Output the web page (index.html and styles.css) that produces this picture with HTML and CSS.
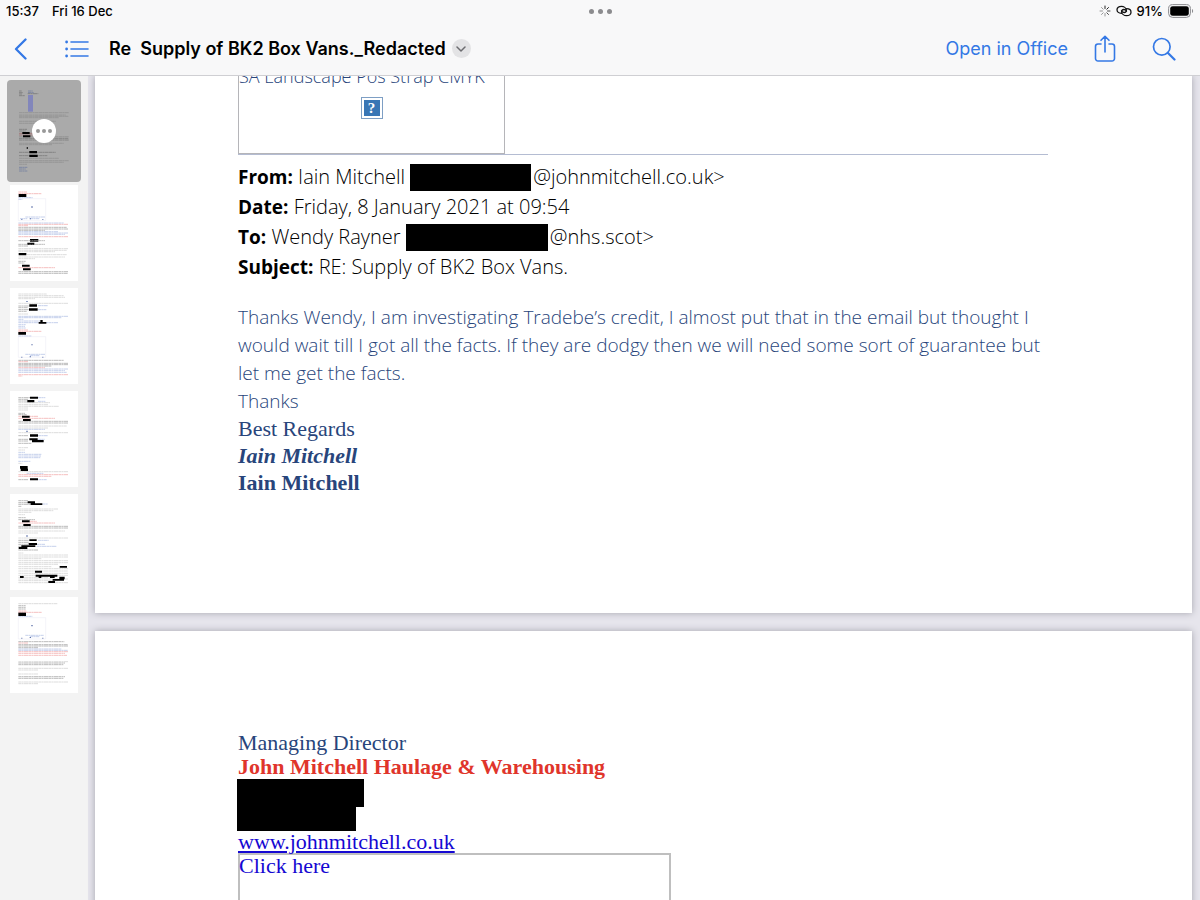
FILE: index.html
```html
<!DOCTYPE html>
<html lang="en">
<head>
<meta charset="utf-8">
<meta name="viewport" content="width=device-width, initial-scale=1">
<title>Re Supply of BK2 Box Vans._Redacted</title>
<link rel="stylesheet" href="styles.css">
</head>
<body>
<div class="app">
  <header class="header">
    <div class="status">
      <div class="status-left"><span>15:37</span><span>Fri 16 Dec</span></div>
      <div class="dots"><i></i><i></i><i></i></div>
      <div class="status-right">
        <svg class="spinner" viewBox="0 0 12 12" width="12" height="12" stroke="#222" stroke-width="1" stroke-linecap="round"><path d="M6 1v2.5M9.5 2.5L7.8 4.2"/><path d="M11 6H8.5M9.5 9.5L7.8 7.8" opacity=".8"/><path d="M6 11V8.5M2.5 9.5l1.7-1.7M1 6h2.5M2.5 2.5l1.7 1.7" opacity=".45"/></svg>
        <svg viewBox="0 0 16 12" width="16" height="12" fill="none" stroke="#111" stroke-width="1.3" stroke-linecap="round"><path d="M5.500 8.300C2.800 8.300 1 6.800 1 4.800S2.800 1.300 5.500 1.300c2.400 0 4.600 1.700 4.900 3.700.2 1.400-.8 2.500-2.200 2.500-1.300 0-2.400-.7-2.700-1.700"/><path d="M10.500 3.700c2.700 0 4.500 1.500 4.500 3.500s-1.800 3.500-4.500 3.500c-2.400 0-4.600-1.700-4.900-3.700-.2-1.400.8-2.500 2.200-2.500 1.300 0 2.400.7 2.700 1.700"/></svg>
        <span>91%</span>
        <svg viewBox="0 0 26 14" width="26" height="14"><rect x=".6" y=".6" width="21.800" height="12.800" rx="4" fill="none" stroke="#8a8a8e"/><rect x="2.200" y="2.200" width="18.600" height="9.600" rx="2.400"/><path d="M24 5v4c1.500-.6 1.500-3.400 0-4z" fill="#8a8a8e"/></svg>
      </div>
    </div>
    <div class="toolbar">
      <button class="icon-btn back" aria-label="Back"><svg viewBox="0 0 14 22" width="14" height="22" fill="none" stroke="currentColor" stroke-width="2.300" stroke-linecap="round" stroke-linejoin="round"><path d="M11.500 1.500L2 11l9.500 9.500"/></svg></button>
      <button class="icon-btn list" aria-label="Contents"><svg viewBox="0 0 24 18" width="24" height="18" fill="currentColor"><circle cx="1.600" cy="2" r="1.400"/><circle cx="1.600" cy="9" r="1.400"/><circle cx="1.600" cy="16" r="1.400"/><path d="M6 2h17M6 9h17M6 16h17" stroke="currentColor" stroke-width="1.600" stroke-linecap="round"/></svg></button>
      <h1 class="title">Re  Supply of BK2 Box Vans._Redacted</h1>
      <button class="more" aria-label="Document options"><svg viewBox="0 0 10 6" width="10" height="6" fill="none" stroke="#6c6c70" stroke-width="1.500" stroke-linecap="round" stroke-linejoin="round"><path d="M1 1l4 4 4-4"/></svg></button>
      <button class="text-btn">Open in Office</button>
      <button class="icon-btn share" aria-label="Share"><svg viewBox="0 0 22 28" width="22" height="28" fill="none" stroke="currentColor" stroke-width="1.600" stroke-linecap="round" stroke-linejoin="round"><path d="M7 9H4a2.500 2.500 0 0 0-2.500 2.500v12A2.500 2.500 0 0 0 4 26h14a2.500 2.500 0 0 0 2.500-2.500v-12A2.500 2.500 0 0 0 18 9h-3M11 17V1.500M7 5.300l4-4 4 4"/></svg></button>
      <button class="icon-btn" aria-label="Search"><svg viewBox="0 0 24 24" width="24" height="24" fill="none" stroke="currentColor" stroke-linecap="round"><circle cx="9.800" cy="9.800" r="8.300" stroke-width="1.700"/><path d="M16 16l6.500 6.500" stroke-width="2.200"/></svg></button>
    </div>
  </header>
  <div class="body">
    <nav class="thumbs" aria-label="Pages">
      <button class="thumb selected" aria-label="Page 1">
        <svg viewBox="0 0 222 306">
          <path class="k" d="M36 33h8M36 38h12M36 42h10M36 47h18M62 41h32M36 148h24M36 153h20"/>
          <rect class="purple" x="63" y="45" width="15" height="50"/><path class="b" d="M63 33h14M63 38h18"/>
          <path class="g" d="M36 98h149M36 105h140M36 109h148M36 113h120M36 124h110M36 130h96M36 170h150M36 190h134M36 194h100M36 235h120M36 242h150M36 247h134M36 253h24"/>
          <path class="k" d="M36 175h148M36 180h150M36 217h110M36 227h85"/><path class="r" d="M36 160h50M36 165h80"/><path class="b" d="M36 262h25M36 267h20M36 273h25"/>
          <path class="redact" d="M46 156h22v6H46zM48 166h22v6H48zM67 213h23v7H67zM67 224h25v7H67zM59 202h4v4h-4z"/>
        </svg>
        <span class="bubble"><i></i><i></i><i></i></span>
      </button>
      <button class="thumb" aria-label="Page 2">
        <svg viewBox="0 0 204 288">
          <path class="r" d="M25 21h26M25 26h70M25 118h150M25 122h30M25 155h150M25 248h110"/><path class="b" d="M25 38h43M25 43h12M46 96h60M30 101h22M60 101h28M25 114h137M25 140h120M25 144h150M25 148h140"/>
          <path class="frame" d="M25 41h82v66H25z"/><path class="redact" d="M26 27h23v9H26zM60 162h25v8H60zM52 173h21v7H52zM26 204h23v7H26zM36 239h23v6H36zM39 250h23v6H39z"/>
          <path class="k" d="M25 127h145M25 132h150M25 136h80M25 167h80M25 178h80M25 183h30M25 229h22M25 234h18M25 260h150M25 265h148"/><path class="g" d="M25 191h150M25 196h145M25 200h110M51 209h120M25 216h140M25 221h50"/>
          <path class="mark" d="M64 64h4v4h-4zM34 102h3v3h-3zM59 100h4v3h-4zM97 102h3v3h-3z"/>
        </svg>
      </button>
      <button class="thumb" aria-label="Page 3">
        <svg viewBox="0 0 204 288">
          <path class="g" d="M25 18h85M25 23h137M25 28h140M25 32h50M25 46h149M25 78h30"/><path class="k" d="M25 54h40M25 59h28M25 65h40M25 70h25M25 217h137M25 226h150M25 230h150M25 234h100"/>
          <path class="b" d="M84 53h30M84 65h25M25 85h149M25 89h130M25 94h15M25 99h65M25 104h120M25 110h22M25 115h20M25 120h22M25 144h40M46 199h60M60 203h28M25 243h149M25 248h140M25 253h145"/>
          <path class="r" d="M25 126h30M25 130h70M25 221h30M25 239h80M25 260h150M25 264h12"/><path class="frame" d="M25 146h82v62H25z"/>
          <path class="redact" d="M58 49h23v7H58zM57 61h26v7H57zM91 96h7v6h-7zM86 102h23v5H86zM25 132h23v8H25z"/><path class="mark" d="M49 39h4v3h-4zM64 169h4v3h-4zM34 206h3v3h-3zM59 205h4v3h-4zM97 206h3v3h-3z"/>
        </svg>
      </button>
      <button class="thumb" aria-label="Page 4">
        <svg viewBox="0 0 204 288">
          <path class="k" d="M25 20h35M25 25h30M25 30h28M25 67h20M25 71h25M25 91h149M25 96h150M25 134h30M25 145h30M25 150h30M25 157h40M25 266h30"/>
          <path class="g" d="M25 35h95M25 41h90M25 46h122M25 51h30M25 57h30M25 105h145M25 111h90M25 125h149M25 170h30M25 177h20M25 217h12M25 242h149"/>
          <path class="b" d="M84 20h22M84 31h22M25 115h80M84 134h30M84 145h20M25 184h20M25 190h70M25 195h68M25 200h66M25 211h36M50 247h50M85 266h25"/><path class="r" d="M25 76h60M25 82h110M25 251h149M25 256h100"/>
          <path class="redact" d="M60 17h24v6H60zM52 27h21v7H52zM36 74h23v6H36zM39 84h23v6H39zM60 130h24v7H60zM58 142h25v6H58zM66 147h35v7H66zM30 225h23v8H30zM32 233h22v7H32zM60 262h24v6H60z"/><path class="mark" d="M49 119h4v4h-4z"/>
        </svg>
      </button>
      <button class="thumb" aria-label="Page 5">
        <svg viewBox="0 0 204 288">
          <path class="k" d="M25 20h30M25 26h30M25 31h40M25 37h10M25 71h22M25 77h50M25 97h149M25 102h150M25 139h32M25 145h32M25 151h30M25 157h20M25 168h60"/>
          <path class="g" d="M25 45h120M25 50h105M25 55h40M25 62h20M25 111h140M25 117h60M25 132h149M25 177h15M25 183h150M25 189h149M25 194h70M25 200h150M25 206h149M25 211h120M25 218h100M25 224h149M25 231h148M25 238h150M25 244h149M25 250h90M25 255h149M25 260h120M25 266h149"/>
          <path class="b" d="M97 30h17M84 139h32M80 151h25M80 157h60"/><path class="r" d="M60 82h20M25 87h110"/>
          <path class="redact" d="M53 22h22v6H53zM62 28h35v5H62zM36 79h23v6H36zM40 90h22v6H40zM58 136h22v5H58zM56 147h25v6H56zM34 154h42v5H34zM26 159h26v6H26zM149 216h22v5h-22zM75 230h21v6H75zM77 242h65v6H77zM30 246h11v6H30zM86 246h8v6h-8zM120 246h14v6h-14zM148 248h16v8h-16zM128 255h34v5h-34zM115 261h20v6h-20z"/><path class="mark" d="M49 124h4v4h-4z"/>
        </svg>
      </button>
      <button class="thumb" aria-label="Page 6">
        <svg viewBox="0 0 204 288">
          <path class="g" d="M25 20h117M25 194h149M25 214h149M25 219h60M25 231h60M25 255h149M25 260h60"/><path class="k" d="M25 26h22M25 31h22M25 36h22M25 134h138M25 143h148M25 147h149M25 152h60M25 198h140M25 203h135M25 239h140M25 244h135"/>
          <path class="r" d="M25 42h24M25 46h71M25 138h30M25 164h150M25 169h140M25 175h146"/><path class="b" d="M25 58h42M46 115h55M60 119h28M25 156h130M25 160h148"/>
          <path class="frame" d="M25 62h82v64H25z"/><path class="redact" d="M25 47h23v10H25z"/><path class="mark" d="M64 84h4v4h-4zM34 122h3v3h-3zM59 120h4v3h-4zM97 122h3v3h-3z"/>
        </svg>
      </button>
    </nav>
    <main class="document">
      <article class="page first">
        <div class="rule-row">
          <div class="image-frame"><span>SA Landscape Pos Strap CMYK</span>
            <div class="missing">?</div>
          </div>
        </div>
        <div class="mail-head">
          <p><b>From:</b> Iain Mitchell <span class="bar from"></span>@johnmitchell.co.uk&gt;</p>
          <p><b>Date:</b> Friday, 8 January 2021 at 09:54</p>
          <p><b>To:</b> Wendy Rayner <span class="bar to"></span>@nhs.scot&gt;</p>
          <p><b>Subject:</b> RE: Supply of BK2 Box Vans.</p>
        </div>
        <div class="message">
          <p>Thanks Wendy, I am investigating Tradebe’s credit, I almost put that in the email but thought I would wait till I got all the facts. If they are dodgy then we will need some sort of guarantee but let me get the facts.</p>
          <p>Thanks</p>
        </div>
        <div class="signature">
          <p>Best Regards</p>
          <p class="script">Iain Mitchell</p>
          <p><b>Iain Mitchell</b></p>
        </div>
      </article>
      <article class="page second">
        <p>Managing Director</p>
        <p class="company">John Mitchell Haulage &amp; Warehousing</p>
        <div class="block wide"></div>
        <div class="block"></div>
        <p class="site"><a href="#site">www.johnmitchell.co.uk</a></p>
        <div class="logo-frame"><a href="#logo">Click here</a></div>
      </article>
    </main>
  </div>
</div>
</body>
</html>
```
FILE: styles.css
```css
* { box-sizing: border-box; }
body { margin: 0; background: #e6e5ec; font-family: Inter, "Liberation Sans", sans-serif; }
p, h1 { margin: 0; }
button { border: 0; padding: 0; background: none; font: inherit; color: inherit; }
svg { display: block; }

.app { display: flex; flex-direction: column; height: 100vh; overflow: hidden; }

.header { flex: none; position: relative; z-index: 2; background: #f8f8f9; border-bottom: 1px solid #cfcfd3; }
.status { display: grid; grid-template-columns: 1fr auto 1fr; align-items: center; height: 22px; padding: 0 6px; font-size: 13px; font-weight: 500; }
.status-left { display: flex; gap: 13px; }
.status-right { display: flex; justify-content: flex-end; align-items: center; gap: 5px; }
.dots { display: flex; gap: 4px; }
.dots i { width: 5px; height: 5px; border-radius: 50%; background: #8b8b8e; }

.toolbar { display: flex; align-items: center; height: 53px; padding: 0 24px 0 14px; color: #3478e5; }
.list { margin-left: 37px; }
.title { margin-left: 20px; white-space: pre; font-size: 18px; font-weight: 600; color: #000; }
.more { display: grid; place-items: center; width: 19px; height: 19px; margin-left: 6px; border-radius: 50%; background: #e3e3e5; }
.text-btn { margin-left: auto; font-size: 18px; }
.share { margin: 0 36px 0 26px; }

.body { flex: 1; min-height: 0; display: flex; }
.thumbs { flex: none; display: flex; flex-direction: column; align-items: center; gap: 7px; width: 88px; padding-top: 4px; background: #f3f3f3; }
.thumb { flex: none; width: 68px; background: #fff; }
.selected { position: relative; width: 74px; margin-bottom: -4px; border-radius: 4px; background: #aaa; overflow: hidden; }
.thumb svg { width: 100%; }
.thumb path { fill: none; stroke-width: 2; stroke-dasharray: 9 1 5 1 13 1; }
.thumb .k { stroke: #999; }
.thumb .g { stroke: #ccc; }
.thumb .r { stroke: #f0a0a0; }
.thumb .b { stroke: #a9bae2; }
.thumb .frame { stroke: #dde; stroke-width: 1; stroke-dasharray: none; }
.thumb .redact { fill: #000; stroke: none; }
.thumb .mark { fill: #5a6fa8; stroke: none; }
.purple { fill: #8286bb; }
.selected .k { stroke: #707070; }
.selected .g { stroke: #8c8c8c; }
.selected .b { stroke: #66769f; }
.selected .r { stroke: #9b6464; }
.bubble { position: absolute; left: 50%; top: 50%; display: flex; align-items: center; justify-content: center; gap: 2px; width: 24px; height: 24px; margin: -12px; border-radius: 50%; background: #fff; }
.bubble i { width: 4px; height: 4px; border-radius: 50%; background: #999; }

.document { flex: 1; min-width: 0; display: flex; flex-direction: column; gap: 18px; padding: 0 8px 0 7px; }
.page { flex: none; padding: 0 144px 0 143px; background: #fff; box-shadow: 0 0 7px #a5a4ae; color: #28457b; }

.first { padding-bottom: 117px; font-family: "Open Sans", "Noto Sans", sans-serif; font-size: 19px; font-weight: 300; }
.rule-row { border-bottom: 1px solid #b4bcd2; }
.image-frame { width: 267px; height: 92px; margin-top: -14px; border: solid #b5b5b9; border-width: 0 1px 1px; line-height: 28px; white-space: nowrap; font-size: 18px; }
.missing { display: grid; place-items: center; width: 22px; height: 22px; margin: 7px auto 0; border: 1px solid #7e9fc4; outline: 2px solid #fff; outline-offset: -3px; background: #3876b5; color: #fff; font: bold 15px/1 "Liberation Serif", serif; }
.mail-head { padding-top: 7px; line-height: 30px; font-size: 20px; color: #000; }
.mail-head b { font-size: 19px; font-weight: 700; }
.bar { height: 27px; background: #000; margin-right: 2px; }
.mail-head p { display: flex; align-items: center; white-space: pre; }
.from { width: 121px; }
.to { width: 142px; }
.message { padding-top: 21px; line-height: 28px; }
.signature, .second { font-family: "Liberation Serif", serif; font-size: 22px; font-weight: 400; }
.signature { line-height: 27px; }
.script { font-family: "Brush Script MT", "Liberation Serif", cursive; font-style: italic; font-weight: 700; }

.second { padding-top: 100px; line-height: 24px; }
.company { font-weight: 700; color: #e0352b; }
.block { width: 119px; height: 24px; margin-left: -1px; background: #000; }
.wide { width: 127px; height: 28px; }
.site { line-height: 22px; }
.second a { color: #1508d2; }
.site a { text-decoration: underline; }
.logo-frame { max-width: 433px; height: 260px; border: 2px solid #bfbfbf; line-height: 22px; }
.logo-frame a { margin-left: -1px; text-decoration: none; }
```
